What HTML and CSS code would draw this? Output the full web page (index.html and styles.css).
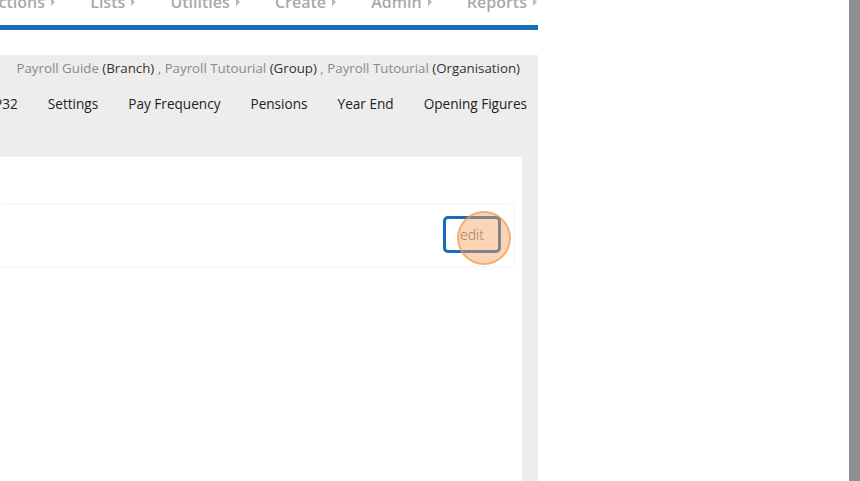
FILE: index.html
```html
<!DOCTYPE html>
<html lang="en">
<head>
    <meta charset="UTF-8">
    <title>Payroll Settings</title>
    <link rel="stylesheet" href="styles.css">
</head>
<body>
    <div class="page">
        <div class="topbar">
            <ul class="menu">
                <li>Actions <span class="caret"></span></li>
                <li>Lists <span class="caret"></span></li>
                <li>Utilities <span class="caret"></span></li>
                <li>Create <span class="caret"></span></li>
                <li>Admin <span class="caret"></span></li>
                <li>Reports <span class="caret"></span></li>
            </ul>
        </div>

        <div class="content">
            <div class="crumbs">
                <span class="name">Payroll Guide</span> (Branch) <span class="name">,</span>
                <span class="name">Payroll Tutourial</span> (Group) <span class="name">,</span>
                <span class="name">Payroll Tutourial</span> (Organisation)
            </div>

            <ul class="tabs">
                <li>P32</li>
                <li>Settings</li>
                <li>Pay Frequency</li>
                <li>Pensions</li>
                <li>Year End</li>
                <li>Opening Figures</li>
            </ul>

            <div class="panel">
                <div class="card">
                    <button class="edit-btn">edit</button>
                    <span class="click-mark"></span>
                </div>
            </div>
        </div>
    </div>
    <div class="scrollbar"></div>
</body>
</html>
```

FILE: styles.css
```css
body {
    margin: 0;
    font-family: "Open Sans", Arial, sans-serif;
    background: #fff;
    display: flex;
    height: 481px;
    overflow: hidden;
}
.page {
    width: 538px;
    display: flex;
    flex-direction: column;
}
.scrollbar {
    width: 11px;
    margin-left: auto;
    background: #8f8f8f;
}
.topbar {
    height: 25px;
    border-bottom: 5px solid #1a6db3;
    overflow: hidden;
}
.menu {
    list-style: none;
    margin: -9px 0 0 -12px;
    padding: 0;
    display: flex;
    gap: 35px;
    font-size: 16px;
    font-weight: 600;
    color: #a9a9a9;
    line-height: 22px;
    white-space: nowrap;
}
.caret {
    display: inline-block;
    width: 0;
    height: 0;
    border-top: 4px solid transparent;
    border-bottom: 4px solid transparent;
    border-left: 4px solid #bbb;
    margin-left: 2px;
    vertical-align: 2px;
}
.content {
    margin-top: 25px;
    flex: 1;
    background: #eeeded;
    display: flex;
    flex-direction: column;
}
.crumbs {
    text-align: right;
    font-size: 13.3px;
    color: #333;
    padding: 4px 18px 0 0;
    line-height: 19px;
    white-space: nowrap;
}
.crumbs .name { color: #8a8a8a; }
.tabs {
    list-style: none;
    margin: 0;
    padding: 16px 11px 0 0;
    display: flex;
    justify-content: flex-end;
    gap: 30px;
    font-size: 13.6px;
    color: #222;
    line-height: 19px;
    white-space: nowrap;
}
.panel {
    flex: 1;
    margin: 44px 16px 0 0;
    background: #fff;
    padding: 48px 9px 0 0;
}
.card {
    position: relative;
    height: 61px;
    background: #fff;
    box-shadow: 0 0 4px rgba(0,0,0,0.09);
    display: flex;
    align-items: center;
    justify-content: flex-end;
    padding-right: 12px;
}
.edit-btn {
    width: 58px;
    height: 37px;
    border: 3px solid #1a6db3;
    border-radius: 5px;
    background: #fff;
    font-family: "Open Sans", Arial, sans-serif;
    font-size: 14px;
    font-weight: 300;
    color: #555;
    text-align: left;
    padding: 0 0 0 14px;
    margin-bottom: 2px;
}
.click-mark {
    position: absolute;
    right: 2px;
    top: 6px;
    width: 50px;
    height: 50px;
    border-radius: 50%;
    background: rgba(247, 160, 90, 0.45);
    border: 2px solid rgba(240, 150, 70, 0.6);
}
```
